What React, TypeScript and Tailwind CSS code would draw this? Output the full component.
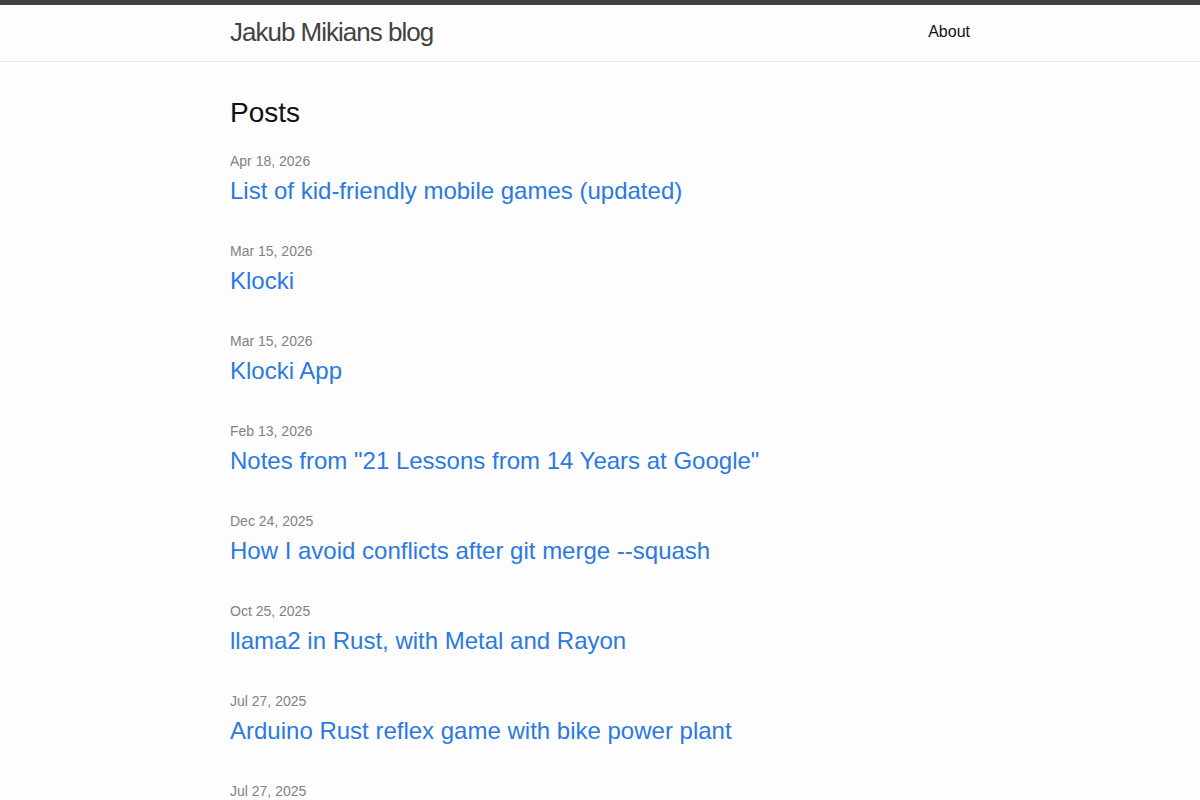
const posts = [
  { date: "Apr 18, 2026", title: "List of kid-friendly mobile games (updated)" },
  { date: "Mar 15, 2026", title: "Klocki" },
  { date: "Mar 15, 2026", title: "Klocki App" },
  { date: "Feb 13, 2026", title: 'Notes from "21 Lessons from 14 Years at Google"' },
  { date: "Dec 24, 2025", title: "How I avoid conflicts after git merge --squash" },
  { date: "Oct 25, 2025", title: "llama2 in Rust, with Metal and Rayon" },
  { date: "Jul 27, 2025", title: "Arduino Rust reflex game with bike power plant" },
  { date: "Jul 27, 2025", title: "Rust on Arduino" },
]

export default function App() {
  return (
    <div className="min-h-screen bg-[#fdfdfd] text-[#111] font-['Liberation_Sans',Arial,sans-serif] text-[16px] leading-[1.5]">
      <header className="border-t-[5px] border-t-[#424242] border-b border-b-[#e8e8e8] min-h-[62px]">
        <div className="mx-auto max-w-[740px] flex justify-between items-start">
          <a href="#" className="text-[26px] leading-[54px] font-light tracking-[-1px] text-[#424242]">
            Jakub Mikians blog
          </a>
          <nav className="leading-[54px]">
            <a href="#" className="text-[#111]">About</a>
          </nav>
        </div>
      </header>

      <main className="py-[30px]">
        <div className="mx-auto max-w-[740px]">
          <h2 className="text-[28px] leading-[42px] mb-[15px]">Posts</h2>
          <ul className="flex flex-col gap-[30px]">
            {posts.map((p, i) => (
              <li key={i}>
                <div className="text-[14px] leading-[24px] text-[#828282]">{p.date}</div>
                <h3>
                  <a href="#" className="block text-[24px] leading-[36px] text-[#2a7ae2]">
                    {p.title}
                  </a>
                </h3>
              </li>
            ))}
          </ul>
        </div>
      </main>
    </div>
  )
}
